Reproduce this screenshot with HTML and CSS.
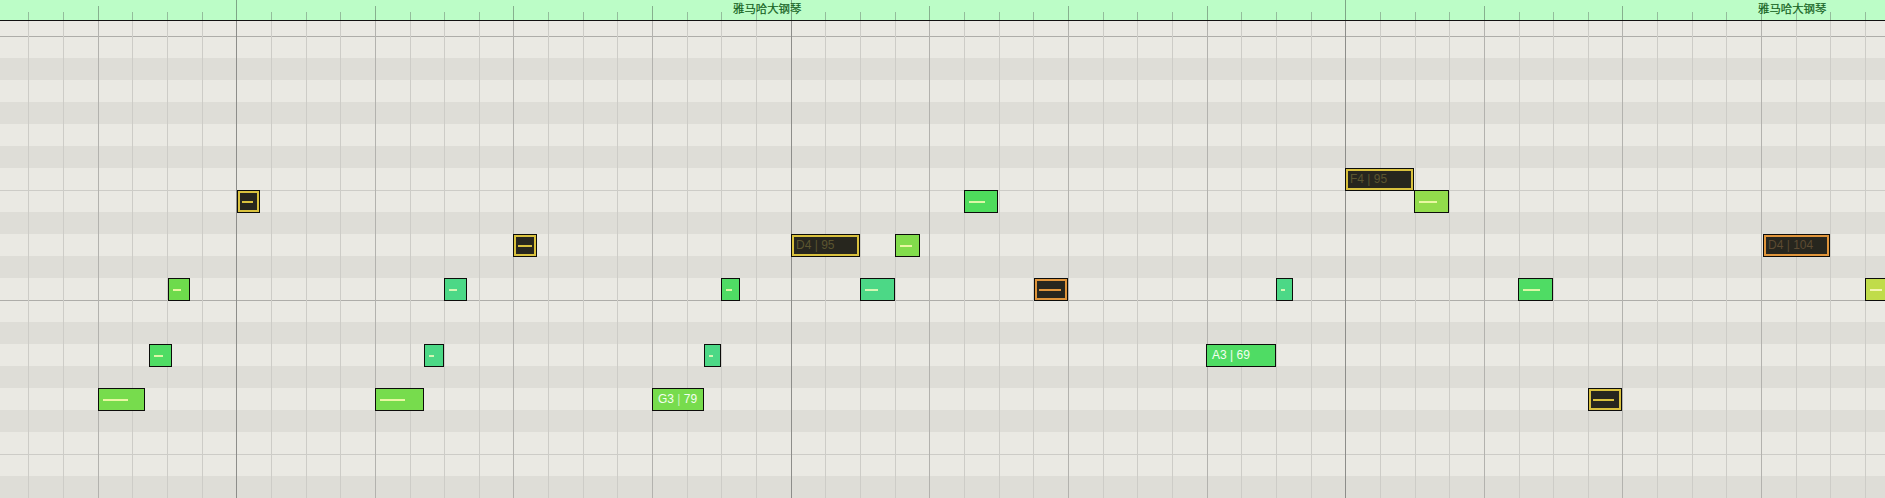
FILE: index.html
```html
<!DOCTYPE html>
<html>
<head>
<meta charset="utf-8">
<link rel="stylesheet" href="styles.css">
</head>
<body>
<div class="roll">
  <div class="ruler">
    <div class="ticks">
      <i class="t"></i><i class="t"></i><i class="t bar"></i><i class="t"></i><i class="t"></i><i class="t"></i>
      <i class="t dark"></i><i class="t"></i><i class="t"></i><i class="t"></i>
      <i class="t bar"></i><i class="t"></i><i class="t"></i><i class="t"></i>
      <i class="t bar"></i><i class="t"></i><i class="t"></i><i class="t"></i>
      <i class="t bar"></i><i class="t"></i><i class="t"></i><i class="t"></i>
      <i class="t dark"></i><i class="t"></i><i class="t"></i><i class="t"></i>
      <i class="t bar"></i><i class="t"></i><i class="t"></i><i class="t"></i>
      <i class="t bar"></i><i class="t"></i><i class="t"></i><i class="t"></i>
      <i class="t bar"></i><i class="t"></i><i class="t"></i><i class="t"></i>
      <i class="t dark"></i><i class="t"></i><i class="t"></i><i class="t"></i>
      <i class="t bar"></i><i class="t"></i><i class="t"></i><i class="t"></i>
      <i class="t bar"></i><i class="t"></i><i class="t"></i><i class="t"></i>
      <i class="t bar"></i><i class="t"></i><i class="t"></i><i class="t"></i>
    </div>
    <span class="clip-name" style="left:733px">雅马哈大钢琴</span>
    <span class="clip-name" style="left:1758px">雅马哈大钢琴</span>
  </div>

  <div class="grid">
    <div class="rows">
      <div class="row w top"></div>
      <div class="row w oct"></div>
      <div class="row b"></div>
      <div class="row w"></div>
      <div class="row b"></div>
      <div class="row w"></div>
      <div class="row b"></div>
      <div class="row w"></div>
      <div class="row w ef"></div>
      <div class="row b"></div>
      <div class="row w"></div>
      <div class="row b"></div>
      <div class="row w"></div>
      <div class="row w oct"></div>
      <div class="row b"></div>
      <div class="row w"></div>
      <div class="row b"></div>
      <div class="row w"></div>
      <div class="row b"></div>
      <div class="row w"></div>
      <div class="row w ef"></div>
      <div class="row b"></div>
    </div>

    <div class="vlines">
      <i class="v"></i><i class="v"></i><i class="v bar"></i><i class="v"></i><i class="v"></i><i class="v"></i>
      <i class="v dark"></i><i class="v"></i><i class="v"></i><i class="v"></i>
      <i class="v bar"></i><i class="v"></i><i class="v"></i><i class="v"></i>
      <i class="v bar"></i><i class="v"></i><i class="v"></i><i class="v"></i>
      <i class="v bar"></i><i class="v"></i><i class="v"></i><i class="v"></i>
      <i class="v dark"></i><i class="v"></i><i class="v"></i><i class="v"></i>
      <i class="v bar"></i><i class="v"></i><i class="v"></i><i class="v"></i>
      <i class="v bar"></i><i class="v"></i><i class="v"></i><i class="v"></i>
      <i class="v bar"></i><i class="v"></i><i class="v"></i><i class="v"></i>
      <i class="v dark"></i><i class="v"></i><i class="v"></i><i class="v"></i>
      <i class="v bar"></i><i class="v"></i><i class="v"></i><i class="v"></i>
      <i class="v bar"></i><i class="v"></i><i class="v"></i><i class="v"></i>
      <i class="v bar"></i><i class="v"></i><i class="v"></i><i class="v"></i>
    </div>

    <div class="note lime" style="left:98px;top:367px;width:47px"><span class="dash" style="width:25px"></span></div>
    <div class="note green" style="left:149px;top:323px;width:23px"><span class="dash" style="width:9px"></span></div>
    <div class="note lime2" style="left:168px;top:257px;width:22px"><span class="dash" style="width:8px"></span></div>
    <div class="note sel" style="left:237px;top:169px;width:23px"><span class="dash" style="width:11px"></span></div>
    <div class="note lime" style="left:375px;top:367px;width:49px"><span class="dash" style="width:25px"></span></div>
    <div class="note teal" style="left:424px;top:323px;width:20px"><span class="dash" style="width:5px"></span></div>
    <div class="note teal" style="left:444px;top:257px;width:23px"><span class="dash" style="width:8px"></span></div>
    <div class="note sel" style="left:513px;top:213px;width:24px"><span class="dash" style="width:14px"></span></div>
    <div class="note lime label" style="left:652px;top:367px;width:52px">G3 <span class="sep">|</span> 79</div>
    <div class="note teal" style="left:704px;top:323px;width:17px"><span class="dash" style="width:4px"></span></div>
    <div class="note green" style="left:721px;top:257px;width:19px"><span class="dash" style="width:6px"></span></div>
    <div class="note sel label" style="left:791px;top:213px;width:69px">D4 | 95</div>
    <div class="note teal" style="left:860px;top:257px;width:35px"><span class="dash" style="width:13px"></span></div>
    <div class="note lime3" style="left:895px;top:213px;width:25px"><span class="dash" style="width:12px"></span></div>
    <div class="note green2" style="left:964px;top:169px;width:34px"><span class="dash" style="width:16px"></span></div>
    <div class="note sel hot" style="left:1034px;top:257px;width:34px"><span class="dash" style="width:22px"></span></div>
    <div class="note green label" style="left:1206px;top:323px;width:70px">A3 | 69</div>
    <div class="note teal" style="left:1276px;top:257px;width:17px"><span class="dash" style="width:4px"></span></div>
    <div class="note sel label" style="left:1345px;top:147px;width:69px">F4 | 95</div>
    <div class="note lime4" style="left:1414px;top:169px;width:35px"><span class="dash" style="width:18px"></span></div>
    <div class="note green" style="left:1518px;top:257px;width:35px"><span class="dash" style="width:17px"></span></div>
    <div class="note sel" style="left:1588px;top:367px;width:34px"><span class="dash" style="width:21px"></span></div>
    <div class="note sel hot label" style="left:1763px;top:213px;width:67px">D4 | 104</div>
    <div class="note yel" style="left:1865px;top:257px;width:35px"><span class="dash" style="width:12px"></span></div>
  </div>
</div>
</body>
</html>
```

FILE: styles.css
```css
* { box-sizing: border-box; }
html, body { margin: 0; padding: 0; }
body {
  width: 1885px;
  height: 498px;
  overflow: hidden;
  background: #eae9e3;
  font-family: "Liberation Sans", Arial, "Noto Sans CJK SC", sans-serif;
}
.roll {
  width: 1885px;
  height: 498px;
  overflow: hidden;
  display: flex;
  flex-direction: column;
}

/* ruler */
.ruler {
  position: relative;
  height: 21px;
  flex: none;
  background: #bcfdc7;
  border-bottom: 1px solid #111;
}
.ticks {
  display: flex;
  align-items: flex-end;
  height: 20px;
  padding-left: 28.3px;
}
.t {
  flex: none;
  width: 34.66px;
  height: 8px;
  border-left: 1px solid #93bd9b;
}
.t.bar { height: 14px; border-left-color: #86b08e; }
.t.dark { height: 20px; border-left-color: #7ea586; }
.clip-name {
  position: absolute;
  top: 0;
  font-family: "Noto Sans CJK SC", sans-serif;
  font-size: 11.4px;
  line-height: 16px;
  color: #16621f;
  white-space: nowrap;
  -webkit-text-stroke: 0.2px #16621f;
}

/* grid */
.grid {
  position: relative;
  flex: 1;
}
.rows { display: flex; flex-direction: column; }
.row { height: 22px; flex: none; }
.row.top { height: 15px; }
.row.w { background: #eae9e3; }
.row.b { background: #deddd7; }
.row.oct { border-top: 1px solid #aeada9; }
.row.ef { border-top: 1px solid #cdccc7; }

.vlines {
  position: absolute;
  inset: 0;
  display: flex;
  padding-left: 28.3px;
}
.v {
  flex: none;
  width: 34.66px;
  height: 100%;
  border-left: 1px solid #cdccc7;
}
.v.bar { border-left-color: #b3b2ae; }
.v.dark { border-left-color: #8d8d8a; }

/* notes */
.note {
  position: absolute;
  height: 23px;
  border: 1px solid #0c0c0a;
  display: flex;
  align-items: center;
  padding-left: 4px;
  overflow: hidden;
  white-space: pre;
  font-size: 12px;
  line-height: 21px;
  color: #f3fff0;
}
.note.label { padding-left: 5px; }
.sep { opacity: 0.7; }
.dash {
  display: block;
  height: 2px;
  flex: none;
  background: #e9f7a2;
}
.lime { background: #77dc4d; }
.lime2 { background: #6edb4c; }
.lime3 { background: #82dc4c; }
.lime4 { background: #92dc4c; }
.green { background: #4fdc64; }
.green2 { background: #4edc5c; }
.teal { background: #4cd886; }
.teal .dash { background: #d3f7b4; }
.green .dash, .green2 .dash { background: #dcf7a6; }
.yel { background: #c0dc4a; }
.yel .dash { background: #f2f5b0; }

.sel {
  background: #27261e;
  box-shadow: inset 0 0 0 2px #d9c13e;
  color: #5b5530;
}
.sel .dash { background: #d9c13e; }
.sel.label { padding-left: 4px; }
.sel.hot {
  box-shadow: inset 0 0 0 2px #e0953b;
  color: #5d4b32;
}
.sel.hot .dash { background: #e0953b; }
```
